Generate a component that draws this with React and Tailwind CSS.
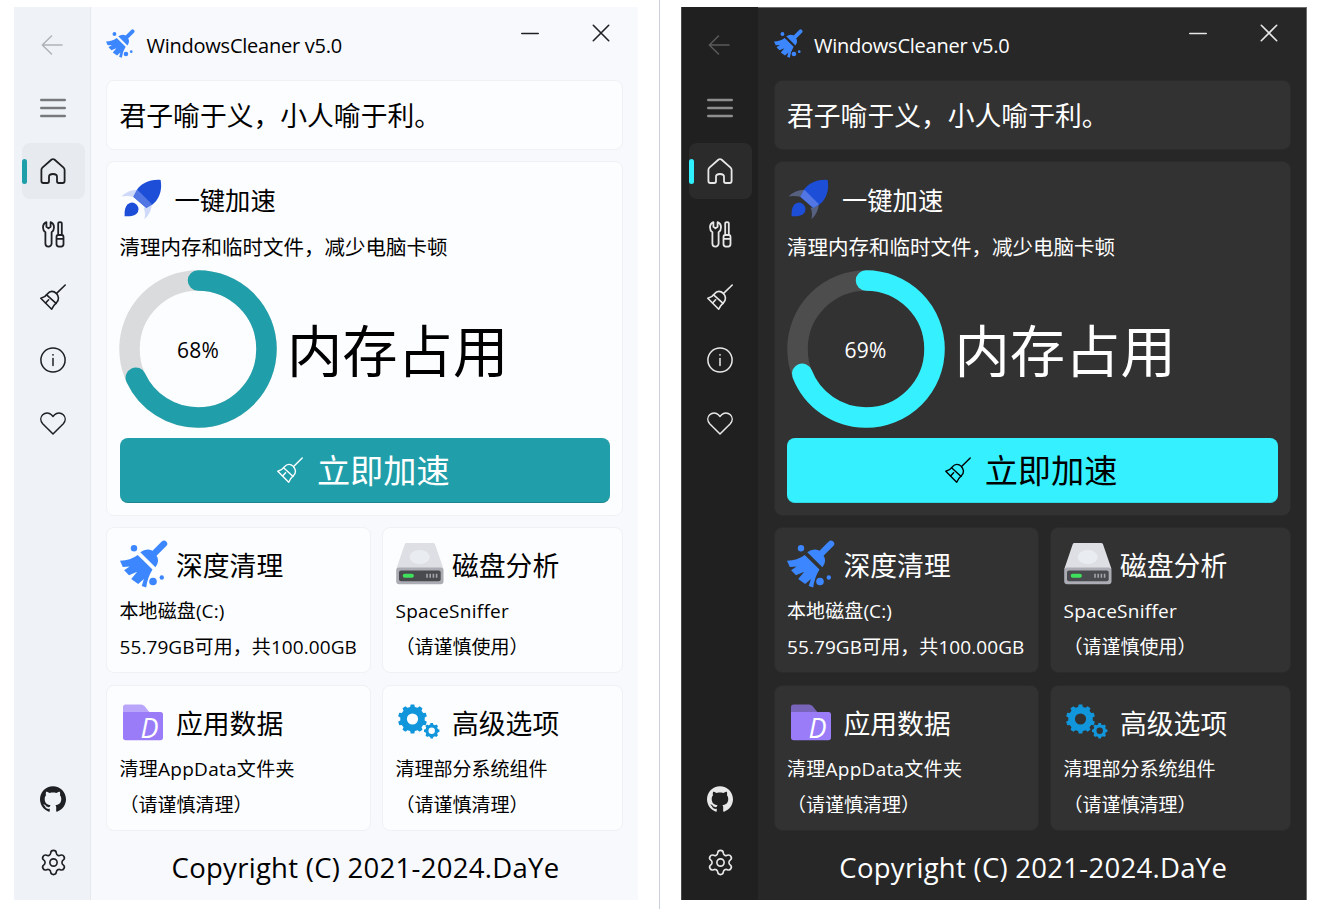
import React from "react";
import { Settings } from "lucide-react";
import { SiGithub } from "react-icons/si";

const themes = {
  light: {
    window: "w-[624px] bg-[#f8f9fd]",
    sidebar: "w-[77px] pl-2 bg-[#eff3f8] border-r border-[#e6e9ed]",
    muted: "text-[#b0b3b6]",
    menu: "text-[#77797b]",
    icon: "text-[#1f2023]",
    active: "bg-[#e7eaee]",
    marker: "bg-[#1f9faa]",
    text: "text-black",
    card: "bg-[#fcfdff] border-[#f0f1f4]",
    button: "bg-[#209faa] border-[#1b868f] text-white",
    track: "text-[#dadbdc]",
    accent: "text-[#209faa]",
    content: "pl-[15px] pr-[15px]",
    percent: 68,
  },
  dark: {
    window: "w-[626px] bg-[#272727] border-t border-r border-[#6c6c6c]",
    sidebar: "w-[77px] pl-[7px] -mt-px bg-[#202020] border-l border-[#4a4a4a]",
    muted: "text-[#5a5a5a]",
    menu: "text-[#8e8e8e]",
    icon: "text-[#e8e8e8]",
    active: "bg-[#2b2b2b]",
    marker: "bg-[#2ff0ff]",
    text: "text-white",
    card: "bg-[#323232] border-[#2b2b2b]",
    button: "bg-[#35f1ff] border-[#30d8e5] text-black",
    track: "text-[#4d4d4d]",
    accent: "text-[#35f1ff]",
    content: "pl-[15.5px] pr-[15px] -mt-px",
    percent: 69,
  },
};

function Svg({ w, h, className = "", children, strokeWidth = 1.4 }) {
  return (
    <svg
      width={w}
      height={h}
      viewBox={`0 0 ${w} ${h}`}
      fill="none"
      stroke="currentColor"
      strokeWidth={strokeWidth}
      strokeLinecap="round"
      strokeLinejoin="round"
      className={`shrink-0 ${className}`}
    >
      {children}
    </svg>
  );
}

const BackIcon = () => (
  <Svg w={22} h={20} strokeWidth={1.5} className="-ml-0.5">
    <path d="M10.500 1 1.300 10l9.200 9M1.300 10H21" />
  </Svg>
);

const MenuIcon = () => (
  <Svg w={26} h={20} strokeWidth={2.4}>
    <path d="M1.200 2h23.600M1.200 10h23.600M1.200 18h23.600" />
  </Svg>
);

const HomeIcon = () => (
  <Svg w={26} h={26} strokeWidth={1.800}>
    <path d="M11.600 1.500 2.400 9.600Q1.400 10.600 1.400 12v11q0 2 2 2h3.900q1.700 0 1.700-1.700v-4.600Q9 16 13 16t4 2.700v4.600q0 1.700 1.700 1.700h3.900q2 0 2-2V12q0-1.400-1-2.400l-9.200-8.100Q13 .6 11.600 1.500Z" />
  </Svg>
);

const ToolsIcon = () => (
  <Svg w={23} h={27} strokeWidth={1.800}>
    <path d="M4.400 1.200v4.600l2.100 1.500 2.100-1.500V1.200C11 2.200 12 4.300 12 6.500s-1 3.700-2.400 4.700v11.300a3.100 3.100 0 0 1-6.200 0V11.200C2 10.200 1 8.700 1 6.500s1-4.300 3.400-5.300Z" />
    <path d="M16.200 14V2.600q0-1.400 1.800-1.400t1.800 1.400V14M14.500 16q0-2 1.700-2h3.600q1.700 0 1.700 2v7.200q0 2.500-3.500 2.500t-3.500-2.500ZM14.500 17.800h7" />
  </Svg>
);

const BroomIcon = ({ strokeWidth = 1.6 }) => (
  <Svg w={26} h={26} strokeWidth={strokeWidth}>
    <path d="M.8 14.300C4 13.500 6 12 7.600 9.700c2.300-3.300 6.300-2.900 8.700-.3 2.500 2.500 3 6.400.4 8.900-2.200 2-3.600 4-5 6.900Z" />
    <path d="m6.600 10.800 9.500 8.600M5.600 19l3-3.200M16.600 9.400 25.200 1" />
  </Svg>
);

const InfoIcon = () => (
  <Svg w={26} h={26} strokeWidth={1.500}>
    <circle cx="13" cy="13" r="12.100" />
    <path d="M13 11.500v7" />
    <circle cx="13" cy="7.800" r=".9" fill="currentColor" stroke="none" />
  </Svg>
);

const HeartIcon = () => (
  <Svg w={26} h={23} strokeWidth={1.500}>
    <path d="M13 22 2.700 11.700C.2 8.900.2 5.200 2.700 2.800s6.200-2.600 8.700 0L13 4.500l1.600-1.700c2.500-2.600 6.200-2.400 8.700 0s2.500 6.100 0 8.900Z" />
  </Svg>
);

function BroomLogo({ size }) {
  return (
    <svg width={size} height={size} viewBox="0 0 48 48" className="shrink-0 text-[#3c87ff]" fill="currentColor">
      <path d="M44 3.800 34 13.800" stroke="currentColor" strokeWidth="6.400" strokeLinecap="round" />
      <path d="M20.300 12.200q5.500-4.200 11.800-1.800l4.500 5.400q3.600 5.200-1.200 11.500Z" />
      <path d="M0 20.800q10.500-.2 17.700-5.800l14.800 14.500Q27.500 37.500 26.200 47.500L21.700 46l2.200-7-5.700 4.900-7-5 6-7.200-8.200 3.500-4.900-5 5.500-3.800-6.800.5Z" />
      <circle cx="14" cy="8.200" r="3.200" />
      <circle cx="33" cy="41.500" r="3.800" />
      <circle cx="41.800" cy="37.500" r="2.200" />
    </svg>
  );
}

function RocketLogo() {
  return (
    <svg width="41" height="41" viewBox="0 0 41 41" className="ml-[1px] shrink-0">
      <path d="M39.600.9C28 .2 20 4.500 15.500 11.500L12.300 17.800l13 11.300 6.200-3.500C38 20 41.500 12 39.600.9Z" fill="#1d4ed8" />
      <path d="M16.400 10.800 30.800 25l-5.500 4.100-13-11.300Z" fill="#5277e4" />
      <path d="M.6 17.500Q7 11 16.400 10.800L12.300 17.800Q6 16.500.6 17.500ZM23.400 40.300Q25 34 22.500 28.500l2.800.6L30.800 25Q30.500 34 23.400 40.300Z" fill="#8ba6f2" fillOpacity=".4" />
      <path d="M3.600 37.300Q3 28.500 6.800 25.200q4.500-3.600 8.900.6 3.900 4.700-.2 9Q12 37.800 3.600 37.300Z" fill="#1d4ed8" />
    </svg>
  );
}

function DiskLogo() {
  return (
    <svg width="48" height="42" viewBox="0 0 48 42" className="shrink-0">
      <path d="M10.500 0h26.500q1.500 0 2 1.200L47.500 26H.3L8.700 1.200Q9 0 10.500 0Z" fill="#dedfe4" />
      <ellipse cx="23.700" cy="14" rx="10" ry="7" fill="#e9edf2" />
      <rect x=".2" y="24.500" width="47.300" height="16.800" rx="3" fill="#abacb4" />
      <rect x="3" y="27.500" width="41.700" height="10.700" rx="2" fill="#494a4e" />
      <rect x="6.700" y="30.700" width="11.200" height="4" rx="2" fill="#3fe05b" />
      <path d="M31 30.700v4M34.200 30.700v4M37.400 30.700v4M40.600 30.700v4" stroke="#a4a5aa" strokeWidth="1.600" />
    </svg>
  );
}

function FolderLogo() {
  return (
    <svg width="40" height="48" viewBox="0 -6.500 40 48" className="-ml-px shrink-0">
      <path d="M0 9V2.500Q0 0 2.500 0H18q2 0 3.500 1.600L27.500 9Z" fill="#9a7cf8" fillOpacity=".68" />
      <path d="M0 7.500h37.500Q40 7.500 40 10v23q0 2.700-2.700 2.700H2.700Q0 35.700 0 33Z" fill="#9a7cf8" />
      <text x="17.500" y="33" fill="#fff" className="font-['Open_Sans'] text-[27px] font-medium italic">D</text>
    </svg>
  );
}

function gearPath(cx, cy, outer, inner, hole, teeth) {
  const points = [];
  const step = (Math.PI * 2) / teeth;
  for (let i = 0; i < teeth; i++) {
    const a = i * step - Math.PI / 2;
    [[-0.31, inner], [-0.2, outer], [0.2, outer], [0.31, inner]].forEach(([k, r]) => {
      points.push(`${(cx + r * Math.cos(a + k * step)).toFixed(2)} ${(cy + r * Math.sin(a + k * step)).toFixed(2)}`);
    });
  }
  return `M${points.join("L")}ZM${cx - hole} ${cy}a${hole} ${hole} 0 1 0 ${hole * 2} 0a${hole} ${hole} 0 1 0 ${-hole * 2} 0Z`;
}

function GearsLogo() {
  return (
    <svg width="42" height="36" viewBox="0 0 42 36" className="-ml-px shrink-0" fill="#1296db" fillRule="evenodd">
      <path d={gearPath(14.5, 15, 14.6, 12.3, 5.6, 10)} />
      <path d={gearPath(33.7, 26.7, 7.8, 6.4, 3.2, 8)} />
    </svg>
  );
}

function NavItem({ theme, active, tone, children }) {
  return (
    <div className={`relative flex h-14 w-[63px] items-center justify-center rounded-lg pr-px ${active ? theme.active : ""} ${tone || theme.icon}`}>
      {active && <span className={`absolute left-0 top-4 h-[25px] w-[5px] rounded-full ${theme.marker}`} />}
      {children}
    </div>
  );
}

function Sidebar({ theme }) {
  return (
    <nav className={`flex shrink-0 flex-col gap-[7px] pt-[10px] pb-[10px] ${theme.sidebar}`}>
      <NavItem theme={theme} tone={theme.muted}><BackIcon /></NavItem>
      <NavItem theme={theme} tone={theme.menu}><MenuIcon /></NavItem>
      <NavItem theme={theme} active><HomeIcon /></NavItem>
      <NavItem theme={theme}><ToolsIcon /></NavItem>
      <NavItem theme={theme}><BroomIcon /></NavItem>
      <NavItem theme={theme}><InfoIcon /></NavItem>
      <NavItem theme={theme}><HeartIcon /></NavItem>
      <div className="flex-1" />
      <NavItem theme={theme}><SiGithub size={26} /></NavItem>
      <NavItem theme={theme}><Settings size={29} strokeWidth={1.35} /></NavItem>
    </nav>
  );
}

function Ring({ theme }) {
  const r = 68.5;
  const length = 2 * Math.PI * r;
  return (
    <div className="-ml-[0.5px] grid size-[158px] shrink-0 place-items-center">
      <svg width="158" height="158" viewBox="0 0 158 158" fill="none" strokeWidth="20.5" className="col-start-1 row-start-1">
        <circle cx="79" cy="79" r={r} stroke="currentColor" className={theme.track} />
        <circle
          cx="79"
          cy="79"
          r={r}
          stroke="currentColor"
          strokeLinecap="round"
          strokeDasharray={`${(length * theme.percent) / 100} ${length}`}
          transform="rotate(-90 79 79)"
          className={theme.accent}
        />
      </svg>
      <span className="col-start-1 row-start-1 pt-0.5 text-[21px] leading-7 tracking-[0.2px]">{theme.percent}%</span>
    </div>
  );
}

function Tile({ theme, icon, title, lines }) {
  return (
    <section className={`flex h-[146px] flex-col rounded-lg border pl-[12.5px] pt-3 ${theme.card}`}>
      <div className="flex h-12 items-center gap-[8.5px]">
        <div className="flex w-12 justify-center">{icon}</div>
        <h3 className="pt-1 text-[26.8px] leading-9">{title}</h3>
      </div>
      <div className="flex flex-col pt-[5px] text-[19px] leading-9">{lines}</div>
    </section>
  );
}

function CleanerWindow({ theme }) {
  return (
    <div className={`flex h-[893px] shrink-0 ${theme.window} ${theme.text}`}>
      <Sidebar theme={theme} />
      <main className={`flex min-w-0 flex-1 flex-col ${theme.content}`}>
        <header className="flex h-[73px] shrink-0 items-start">
          <div className="pt-[22px]"><BroomLogo size={29} /></div>
          <h1 className="pl-[11.5px] pt-[25px] text-[20px] leading-7 tracking-[-0.24px]">WindowsCleaner v5.0</h1>
          <div className={`ml-auto flex gap-[53px] pt-[17px] pr-[13px] ${theme.icon}`}>
            <Svg w={18} h={18} strokeWidth={1.6}><path d="M.8 9.500h16.400" /></Svg>
            <Svg w={18} h={18} strokeWidth={1.6}><path d="m1.300 1.300 15.400 15.400M16.700 1.300 1.300 16.700" /></Svg>
          </div>
        </header>

        <section className={`flex h-[70px] shrink-0 items-center rounded-lg border pl-[12.5px] ${theme.card}`}>
          <p className="pt-0.5 text-[26.8px] leading-9">君子喻于义，小人喻于利。</p>
        </section>

        <section className={`mt-[11px] flex h-[355px] shrink-0 flex-col rounded-lg border pl-[12.5px] pr-3 pt-[13px] ${theme.card}`}>
          <div className="flex h-12 items-center gap-[13px]">
            <RocketLogo />
            <h2 className="pt-0.5 text-[25.3px] leading-9">一键加速</h2>
          </div>
          <p className="pt-[10px] text-[20.5px] leading-7">清理内存和临时文件，减少电脑卡顿</p>
          <div className="flex items-center gap-[10px] pt-[9px]">
            <Ring theme={theme} />
            <span className="pt-1 text-[55.3px] leading-[64px]">内存占用</span>
          </div>
          <button className={`mt-[10px] flex h-[65px] items-center justify-center gap-[14px] rounded-lg border-b pr-[3px] ${theme.button}`}>
            <BroomIcon strokeWidth={1.4} />
            <span className="pt-0.5 text-[33.2px] leading-10">立即加速</span>
          </button>
        </section>

        <div className="mt-[11px] grid shrink-0 grid-cols-[265px_241px] justify-between gap-y-3">
          <Tile
            theme={theme}
            icon={<BroomLogo size={48} />}
            title="深度清理"
            lines={<><p className="tracking-[0.1px]">本地磁盘(C:)</p><p className="tracking-[0.08px]">55.79GB可用，共100.00GB</p></>}
          />
          <Tile
            theme={theme}
            icon={<DiskLogo />}
            title="磁盘分析"
            lines={<><p className="tracking-[0.25px]">SpaceSniffer</p><p>（请谨慎使用）</p></>}
          />
          <Tile
            theme={theme}
            icon={<FolderLogo />}
            title="应用数据"
            lines={<><p className="tracking-[0.27px]">清理AppData文件夹</p><p>（请谨慎清理）</p></>}
          />
          <Tile
            theme={theme}
            icon={<GearsLogo />}
            title="高级选项"
            lines={<><p>清理部分系统组件</p><p>（请谨慎清理）</p></>}
          />
        </div>

        <footer className="flex flex-1 items-center justify-center pl-0.5 pt-1 text-[27.5px] leading-9 tracking-[0.28px]">
          Copyright (C) 2021-2024.DaYe
        </footer>
      </main>
    </div>
  );
}

export default function App() {
  return (
    <div className="flex h-[909px] w-[1319px] overflow-hidden whitespace-nowrap bg-white font-['Open_Sans','Noto_Sans_CJK_SC',sans-serif]">
      <div className="w-[660px] shrink-0 border-r border-[#c8d1db] pl-[14px] pt-[7px]">
        <CleanerWindow theme={themes.light} />
      </div>
      <div className="pl-[21px] pt-[7px]">
        <CleanerWindow theme={themes.dark} />
      </div>
    </div>
  );
}
